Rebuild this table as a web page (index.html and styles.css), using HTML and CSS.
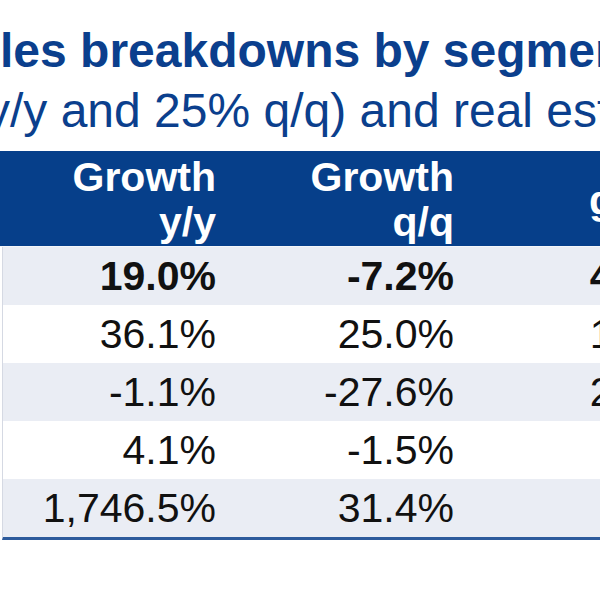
FILE: index.html
```html
<!DOCTYPE html>
<html>
<head>
<meta charset="utf-8">
<link rel="stylesheet" href="styles.css">
</head>
<body>
<div class="slide">
  <h1 class="title">les breakdowns by segment</h1>
  <p class="subtitle">y/y and 25% q/q) and real estate</p>
  <div class="table">
    <div class="row head">
      <div class="cell">Growth<br>y/y</div>
      <div class="cell">Growth<br>q/q</div>
      <div class="cell single">gross</div>
    </div>
    <div class="row shade bold">
      <div class="cell">19.0%</div>
      <div class="cell">-7.2%</div>
      <div class="cell">45.2%</div>
    </div>
    <div class="row">
      <div class="cell">36.1%</div>
      <div class="cell">25.0%</div>
      <div class="cell">13.6%</div>
    </div>
    <div class="row shade">
      <div class="cell">-1.1%</div>
      <div class="cell">-27.6%</div>
      <div class="cell">27.1%</div>
    </div>
    <div class="row">
      <div class="cell">4.1%</div>
      <div class="cell">-1.5%</div>
      <div class="cell">6.0%</div>
    </div>
    <div class="row shade last">
      <div class="cell">1,746.5%</div>
      <div class="cell">31.4%</div>
      <div class="cell">4.3%</div>
    </div>
  </div>
</div>
</body>
</html>
```

FILE: styles.css
```css
html, body {
  margin: 0;
  padding: 0;
  background: #ffffff;
}
body {
  width: 600px;
  height: 600px;
  overflow: hidden;
  font-family: "Liberation Sans", Arial, sans-serif;
}
.slide {
  padding-top: 23px;
  width: 600px;
  overflow: hidden;
}
.title {
  margin: 0;
  font-size: 48px;
  line-height: 56px;
  font-weight: bold;
  color: #0b3f8d;
  white-space: nowrap;
}
.subtitle {
  margin: 4px 0 0 -14px;
  font-size: 48px;
  line-height: 56px;
  color: #0b3f8d;
  white-space: nowrap;
}
.table {
  margin-top: 12px;
  width: 720px;
  border-left: 1px solid #d5d9e3;
  margin-left: 2px;
  border-bottom: 3px solid #2d5b9c;
}
.row {
  display: grid;
  grid-template-columns: 224px 238px 252px;
  height: 58px;
  align-items: center;
  font-size: 41px;
  color: #111111;
  background: #ffffff;
}
.row.shade {
  background: #eaedf4;
}
.row.bold {
  font-weight: bold;
}
.row.head {
  margin-left: -3px;
  padding-left: 3px;
  background: #063f8a;
  color: #ffffff;
  font-weight: bold;
  line-height: 45px;
  align-items: start;
  padding-top: 4px;
  box-sizing: border-box;
  border-bottom: 1px solid #f4f6fa;
  height: 96px;
}
.cell {
  text-align: right;
  padding-right: 11px;
  white-space: nowrap;
}
.cell.single {
  align-self: center;
  text-align: left;
  padding-left: 124px;
}
```
